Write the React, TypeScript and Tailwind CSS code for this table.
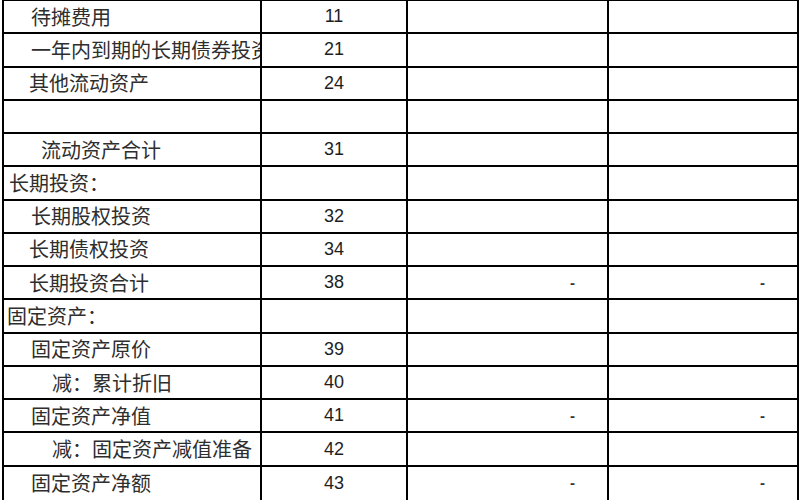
import React from 'react';

type Row = {
  name: string;
  indent: string;
  no: string;
  dash?: boolean;
};

const rows: Row[] = [
  { name: '待摊费用', indent: 'pl-[27px]', no: '11' },
  { name: '一年内到期的长期债券投资', indent: 'pl-[27px]', no: '21' },
  { name: '其他流动资产', indent: 'pl-[25px]', no: '24' },
  { name: '', indent: 'pl-[27px]', no: '' },
  { name: '流动资产合计', indent: 'pl-[37px]', no: '31' },
  { name: '长期投资：', indent: 'pl-[5px]', no: '' },
  { name: '长期股权投资', indent: 'pl-[27px]', no: '32' },
  { name: '长期债权投资', indent: 'pl-[25px]', no: '34' },
  { name: '长期投资合计', indent: 'pl-[25px]', no: '38', dash: true },
  { name: '固定资产：', indent: 'pl-[3px]', no: '' },
  { name: '固定资产原价', indent: 'pl-[27px]', no: '39' },
  { name: '减：累计折旧', indent: 'pl-[48px]', no: '40' },
  { name: '固定资产净值', indent: 'pl-[27px]', no: '41', dash: true },
  { name: '减：固定资产减值准备', indent: 'pl-[48px]', no: '42' },
  { name: '固定资产净额', indent: 'pl-[27px]', no: '43', dash: true },
];

const App = () => {
  return (
    <div className="w-[800px] h-[500px] bg-white overflow-hidden">
      <div className="ml-[2px] w-[797px] h-[500px] border-l-2 border-t border-black grid grid-rows-[repeat(15,minmax(0,1fr))]">
        {rows.map((row, index) => (
          <div
            key={+index}
            className="grid grid-cols-[258px_146px_201px_190px] border-b-2 last:border-b-0 border-black"
          >
            <div
              className={`${row.indent} border-r-2 border-black flex items-center overflow-hidden whitespace-nowrap text-[20px] text-[#2e2e2e] font-['Noto_Sans_CJK_SC',sans-serif]`}
            >
              {row.name}
            </div>
            <div className="border-r-2 border-black flex items-center justify-center text-[18px] text-[#1e1e1e] font-['Liberation_Sans',Arial,sans-serif]">
              {row.no}
            </div>
            <div className="border-r-2 border-black flex items-center justify-end pr-[32px] text-[15px] font-bold text-[#333] font-['Liberation_Sans',Arial,sans-serif]">
              {row.dash ? '-' : ''}
            </div>
            <div className="border-r-2 border-black flex items-center justify-end pr-[32px] text-[15px] font-bold text-[#333] font-['Liberation_Sans',Arial,sans-serif]">
              {row.dash ? '-' : ''}
            </div>
          </div>
        ))}
      </div>
    </div>
  );
};

export default App;
